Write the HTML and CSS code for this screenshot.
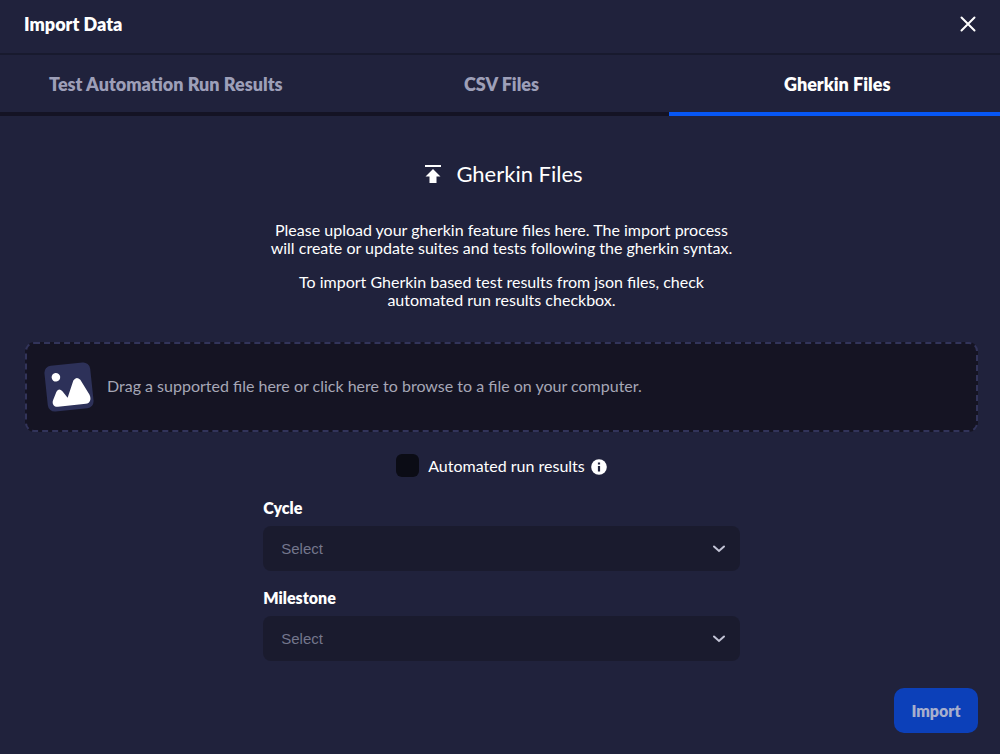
FILE: index.html
```html
<!DOCTYPE html>
<html lang="en">
<head>
<meta charset="utf-8">
<meta name="viewport" content="width=device-width, initial-scale=1.0">
<title>Import Data</title>
<link rel="stylesheet" href="styles.css">
</head>
<body>
    <header class="header">
        <h1>Import Data</h1>
        <button class="close" type="button" aria-label="Close">
            <svg width="16" height="16" viewBox="0 0 16 16"><path d="M1.5 1.5L14.5 14.5M14.5 1.5L1.5 14.5"/></svg>
        </button>
    </header>
    <nav class="tabs">
        <button class="tab" type="button">Test Automation Run Results</button>
        <button class="tab" type="button">CSV Files</button>
        <button class="tab active" type="button">Gherkin Files</button>
    </nav>
    <main class="content">
        <h2 class="title">
            <svg width="16" height="18" viewBox="0 0 16 18"><path d="M0 0H16V2H0ZM8 4L15.500 11.500H11.500V18H4.500V11.500H0.500Z"/></svg>
            Gherkin Files
        </h2>
        <div class="intro">
            <p>Please upload your gherkin feature files here. The import process<br>will create or update suites and tests following the gherkin syntax.</p>
            <p>To import Gherkin based test results from json files, check<br>automated run results checkbox.</p>
        </div>
        <button class="dropzone" type="button">
            <svg width="50" height="50" viewBox="0 0 50 50">
                <g transform="rotate(-6 25 25)">
                    <rect class="tile" x="2" y="2" width="46" height="46" rx="7"/>
                    <circle cx="13" cy="14" r="4.3"/>
                    <path d="M12 43.500C7.500 43.500 6 39.500 8 36L12 28.500Q15 24.500 18 28.500L22.500 35.500L30 19Q33.500 14.500 37 19L44.500 34.500C46.500 39.500 44 43.500 40 43.500Z"/>
                </g>
            </svg>
            <span>Drag a supported file here or click here to browse to a file on your computer.</span>
        </button>
        <form class="form">
            <div class="check">
                <input type="checkbox" id="automated">
                <label for="automated">Automated run results</label>
                <svg width="16" height="16" viewBox="0 0 16 16"><circle cx="8" cy="8" r="7.800"/><path d="M6.900 3.500H9.100V5.500H6.900ZM6.900 7H9.100V12.500H6.900Z"/></svg>
            </div>
            <label class="label" for="cycle">Cycle</label>
            <select id="cycle">
                <option>Select</option>
            </select>
            <label class="label" for="milestone">Milestone</label>
            <select id="milestone">
                <option>Select</option>
            </select>
        </form>
        <button class="import" type="button">Import</button>
    </main>
</body>
</html>
```
FILE: styles.css
```css
*{
    box-sizing: border-box;
}
body{
    margin:0;
    overflow-x:hidden;
    background:#20223c;
    color:white;
    font-family: Lato, sans-serif;
    font-size:16px;
    line-height:18px;
}
h1,h2,p{
    margin:0;
}
button{
    border:none;
    font-family:inherit;
    cursor:pointer;
}
.header{
    display:flex;
    justify-content: space-between;
    align-items: center;
    height:55px;
    padding:0 24px 6px;
    border-bottom:2px solid #181a2e;
}
.header h1{
    font-size:18px;
    font-weight:800;
}
.close{
    display:flex;
    padding:0;
    background:none;
}
.close path{
    stroke:white;
    stroke-width:2;
    stroke-linecap:round;
}
.tabs{
    display:flex;
    margin:0 -5px 0 -2px;
}
.tab{
    flex:1;
    height:61px;
    padding:0;
    background:none;
    border-bottom:4px solid #141324;
    color:#9d9fb8;
    font-size:18px;
    font-weight:800;
}
.tab.active{
    border-color:#0757f5;
    color:white;
}
.content{
    display:flex;
    flex-direction: column;
    padding:44px 22px 20px 25px;
}
.title{
    display:flex;
    justify-content: center;
    align-items: center;
    gap:15px;
    padding-left:5px;
    font-size:22px;
    font-weight:normal;
    line-height:28px;
}
.title path{
    fill:white;
}
.intro{
    display:flex;
    flex-direction: column;
    gap:16px;
    padding:33px 0;
    text-align:center;
}
.dropzone{
    display:flex;
    align-items: center;
    gap:13px;
    height:90px;
    padding:0 17px;
    background:#151423;
    border:2px dashed #32345a;
    border-radius:9px;
    color:#a6a7b6;
    font-size:16px;
    text-align:left;
}
.dropzone span{
    padding-bottom:4px;
}
.dropzone .tile{
    fill:#2d3159;
}
.dropzone circle,
.dropzone path{
    fill:white;
}
.form{
    display:flex;
    flex-direction: column;
    width:50%;
    margin:22px auto 0;
}
.check{
    display:flex;
    justify-content: center;
    align-items: center;
    margin-bottom:22px;
}
.check input{
    appearance:none;
    width:23px;
    height:23px;
    margin:0 9px 0 0;
    background:#0b0c15;
    border-radius:6px;
}
.check input:checked{
    background:#0757f5;
}
.check svg{
    margin:3px 0 0 6px;
}
.check circle{
    fill:white;
}
.check path{
    fill:#20223c;
}
.label{
    margin-bottom:9px;
    font-weight:800;
}
select{
    appearance:none;
    height:45px;
    margin-bottom:18px;
    padding:0 18px;
    border:none;
    border-radius:8px;
    background:#1a1b2e url("data:image/svg+xml,%3Csvg xmlns='http://www.w3.org/2000/svg' width='14' height='8' viewBox='0 0 14 8'%3E%3Cpath d='M2 1.500L7 6L12 1.500' fill='none' stroke='%23c3c4d6' stroke-width='2' stroke-linecap='round'/%3E%3C/svg%3E") no-repeat right 14px center;
    color:#74768c;
    font-family:"Liberation Sans", sans-serif;
    font-size:15px;
}
.import{
    align-self:flex-end;
    width:84px;
    height:45px;
    margin-top:9px;
    background:#0c40b9;
    border-radius:10px;
    color:#a7afcd;
    font-size:16px;
    font-weight:800;
}
```
